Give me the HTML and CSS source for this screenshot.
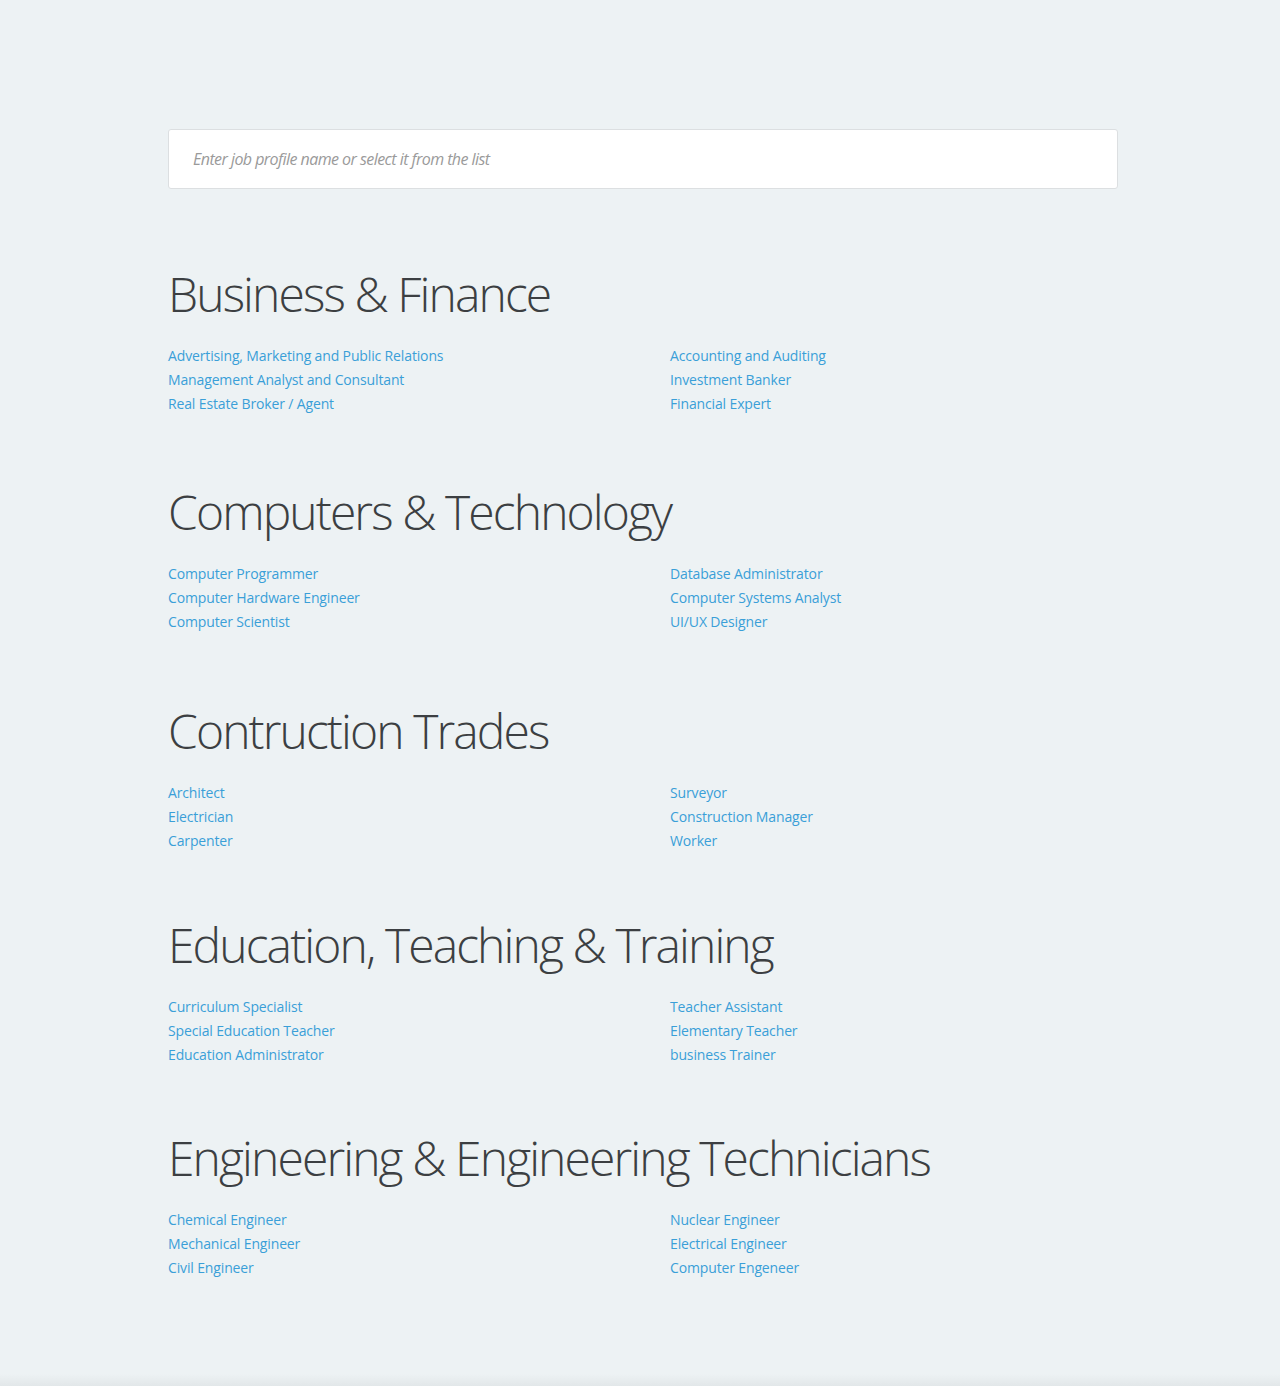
FILE: index.html
```html
<!DOCTYPE html>
<html lang="en">
<head>
<meta charset="utf-8">
<title>Job profiles</title>
<link rel="stylesheet" href="styles.css">
</head>
<body>
<main class="page">
  <div class="search">
    <input class="search-input" type="text" placeholder="Enter job profile name or select it from the list">
  </div>

  <section class="category">
    <h2 class="category-title">Business &amp; Finance</h2>
    <div class="links">
      <ul class="link-col">
        <li><a href="#">Advertising, Marketing and Public Relations</a></li>
        <li><a href="#">Management Analyst and Consultant</a></li>
        <li><a href="#">Real Estate Broker / Agent</a></li>
      </ul>
      <ul class="link-col">
        <li><a href="#">Accounting and Auditing</a></li>
        <li><a href="#">Investment Banker</a></li>
        <li><a href="#">Financial Expert</a></li>
      </ul>
    </div>
  </section>

  <section class="category">
    <h2 class="category-title">Computers &amp; Technology</h2>
    <div class="links">
      <ul class="link-col">
        <li><a href="#">Computer Programmer</a></li>
        <li><a href="#">Computer Hardware Engineer</a></li>
        <li><a href="#">Computer Scientist</a></li>
      </ul>
      <ul class="link-col">
        <li><a href="#">Database Administrator</a></li>
        <li><a href="#">Computer Systems Analyst</a></li>
        <li><a href="#">UI/UX Designer</a></li>
      </ul>
    </div>
  </section>

  <section class="category">
    <h2 class="category-title">Contruction Trades</h2>
    <div class="links">
      <ul class="link-col">
        <li><a href="#">Architect</a></li>
        <li><a href="#">Electrician</a></li>
        <li><a href="#">Carpenter</a></li>
      </ul>
      <ul class="link-col">
        <li><a href="#">Surveyor</a></li>
        <li><a href="#">Construction Manager</a></li>
        <li><a href="#">Worker</a></li>
      </ul>
    </div>
  </section>

  <section class="category">
    <h2 class="category-title">Education, Teaching &amp; Training</h2>
    <div class="links">
      <ul class="link-col">
        <li><a href="#">Curriculum Specialist</a></li>
        <li><a href="#">Special Education Teacher</a></li>
        <li><a href="#">Education Administrator</a></li>
      </ul>
      <ul class="link-col">
        <li><a href="#">Teacher Assistant</a></li>
        <li><a href="#">Elementary Teacher</a></li>
        <li><a href="#">business Trainer</a></li>
      </ul>
    </div>
  </section>

  <section class="category">
    <h2 class="category-title">Engineering &amp; Engineering Technicians</h2>
    <div class="links">
      <ul class="link-col">
        <li><a href="#">Chemical Engineer</a></li>
        <li><a href="#">Mechanical Engineer</a></li>
        <li><a href="#">Civil Engineer</a></li>
      </ul>
      <ul class="link-col">
        <li><a href="#">Nuclear Engineer</a></li>
        <li><a href="#">Electrical Engineer</a></li>
        <li><a href="#">Computer Engeneer</a></li>
      </ul>
    </div>
  </section>
</main>
<footer class="footer"></footer>
</body>
</html>
```

FILE: styles.css
```css
html, body {
  margin: 0;
  padding: 0;
}

body {
  background: #edf2f4;
  font-family: "Open Sans", "Liberation Sans", sans-serif;
  color: #3c3f42;
}

.page {
  padding: 129px 0 94px 168px;
  width: 950px;
}

.search {
  display: flex;
}

.search-input {
  flex: 1;
  height: 60px;
  box-sizing: border-box;
  border: 1px solid #dcdfe1;
  border-radius: 3px;
  background: #ffffff;
  padding: 0 24px;
  font-family: "Open Sans", sans-serif;
  font-size: 16px;
  color: #555;
  outline: none;
}

.search-input::placeholder {
  font-style: italic;
  color: #9a9a9a;
  letter-spacing: -0.55px;
}

.category {
  margin-top: 64px;
}

.category:nth-of-type(1) {
  margin-top: 75px;
}

.category:nth-of-type(2) {
  margin-top: 66px;
}

.category:nth-of-type(3) {
  margin-top: 67px;
}

.category:nth-of-type(4) {
  margin-top: 62px;
}

.category:nth-of-type(5) {
  margin-top: 61px;
}

.category-title {
  margin: 0;
  font-size: 48px;
  line-height: 60px;
  font-weight: 300;
  letter-spacing: -1.9px;
  color: #3c3f42;
}

.links {
  display: grid;
  grid-template-columns: 502px 1fr;
  margin-top: 20px;
}

.link-col {
  list-style: none;
  margin: 0;
  padding: 0;
}

.link-col li {
  font-size: 14px;
  line-height: 24px;
  letter-spacing: -0.14px;
}

.link-col a {
  color: #3a9fd8;
  text-decoration: none;
}

.footer {
  height: 12px;
  background: linear-gradient(#edf2f4, #e2e7e9);
}
```
